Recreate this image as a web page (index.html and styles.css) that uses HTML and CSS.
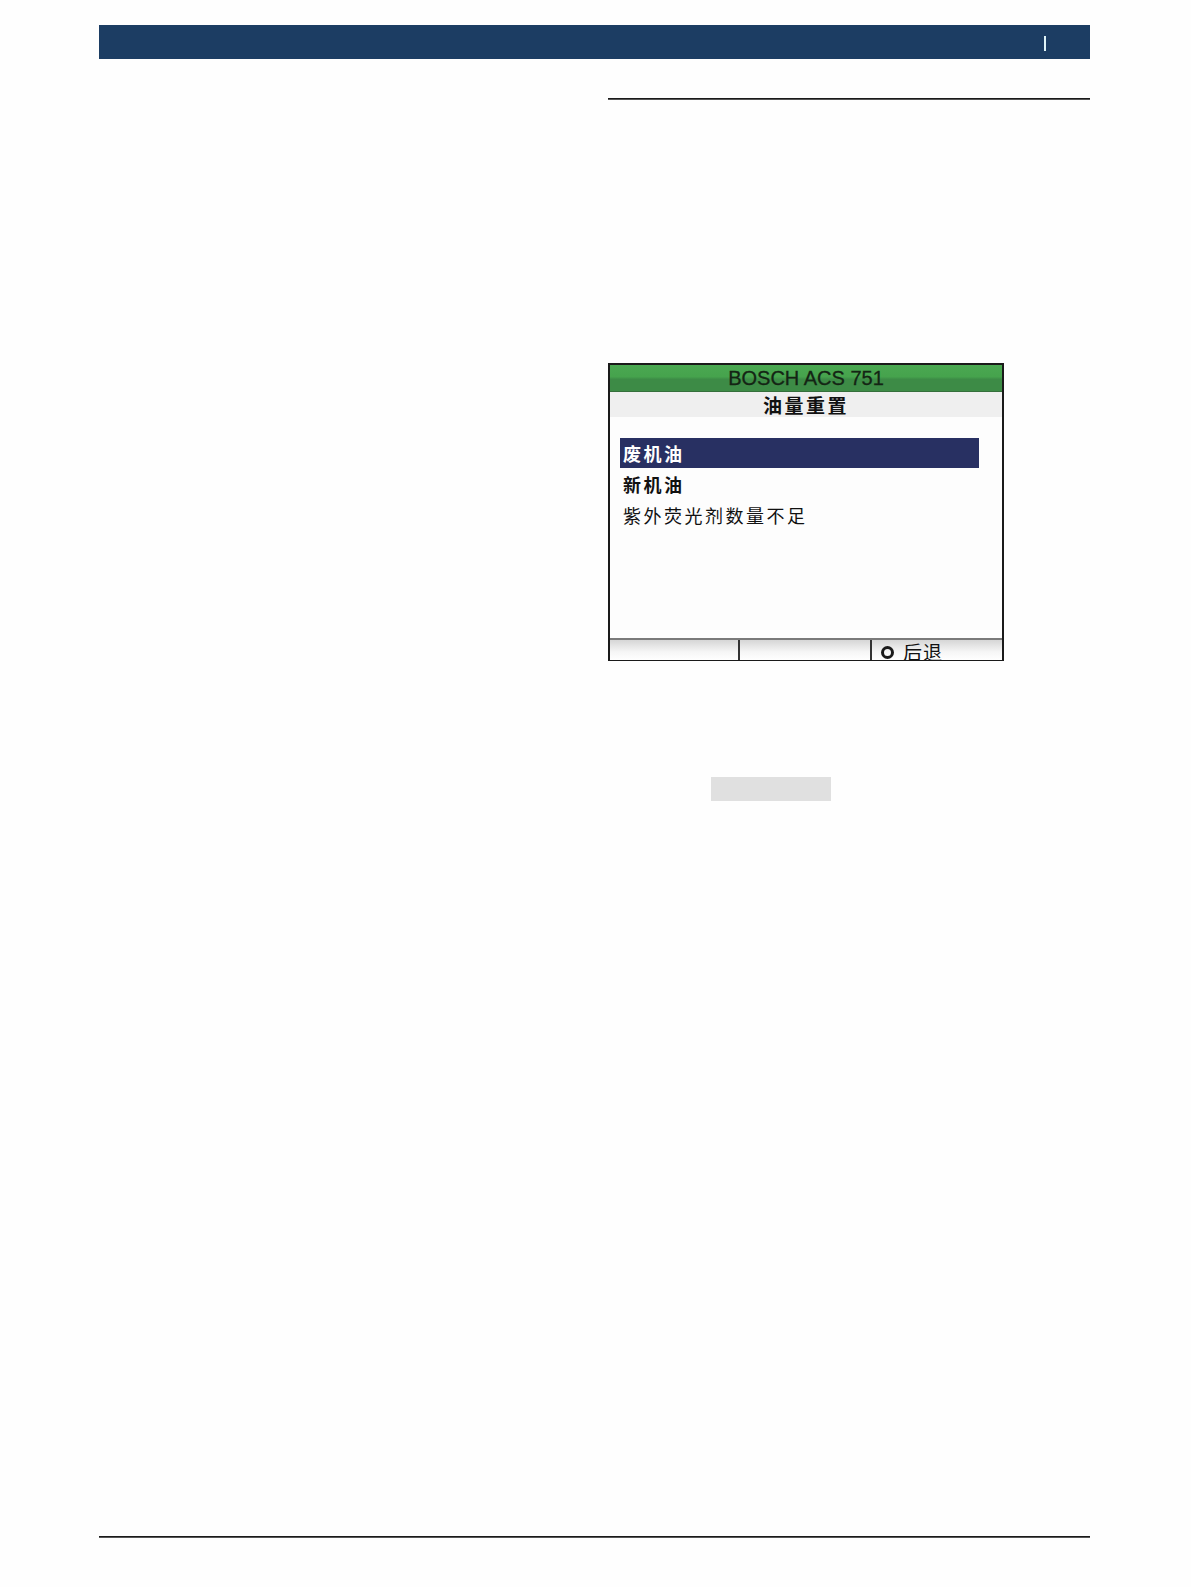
FILE: index.html
```html
<!DOCTYPE html>
<html lang="zh">
<head>
<meta charset="utf-8">
<title>BOSCH ACS 751</title>
<link rel="stylesheet" href="styles.css">
</head>
<body>
<div class="page">
  <header class="topbar"><span class="mark"></span></header>
  <div class="cols">
    <div class="col-left"></div>
    <div class="col-right">
      <div class="rule"></div>
      <div class="screen">
        <div class="s-title">BOSCH ACS 751</div>
        <div class="s-sub">油量重置</div>
        <div class="s-body">
          <div class="item sel">废机油</div>
          <div class="item bold">新机油</div>
          <div class="item">紫外荧光剂数量不足</div>
        </div>
        <div class="s-foot">
          <div class="cell"></div>
          <div class="cell"></div>
          <div class="cell back"><span class="ring"></span><span class="lbl">后退</span></div>
        </div>
      </div>
      <div class="caption"></div>
    </div>
  </div>
  <div class="bottom-rule"></div>
</div>
</body>
</html>
```
FILE: styles.css
```css
html, body { margin: 0; padding: 0; background: #fefefe; }
.page { width: 1191px; height: 1587px; padding-left: 99px; padding-top: 25px; box-sizing: border-box; position: relative; }
.topbar { width: 991px; height: 34px; background: #1c3d63; display: flex; justify-content: flex-end; align-items: flex-start; box-sizing: border-box; padding-right: 44px; padding-top: 11px; }
.mark { width: 2px; height: 15px; background: #dff3f7; display: block; }
.cols { display: flex; }
.col-left { width: 509px; }
.col-right { width: 482px; padding-top: 39px; }
.rule { height: 1px; background: #1a1a1a; border-bottom: 0.5px solid #555; }
.screen { margin-top: 263px; width: 396px; height: 298px; box-sizing: border-box; border: 2px solid #1a1a1a; border-bottom-width: 1px; background: #fdfdfd; display: flex; flex-direction: column; overflow: hidden; }
.s-title { height: 27px; background: linear-gradient(#4aa851 0%, #46a34d 45%, #3d8b46 55%, #3d8b46 100%); border-bottom: 1px solid #356f3b; box-sizing: border-box; text-align: center; font-family: "Liberation Sans", Arial, sans-serif; font-size: 20px; line-height: 27px; color: #142414; -webkit-text-stroke: 0.3px #142414; }
.s-sub { height: 25px; background: #efefef; text-align: center; font-family: "Noto Sans CJK SC", sans-serif; font-weight: 700; font-size: 19px; line-height: 25px; letter-spacing: 2.5px; color: #111; }
.s-body { flex: 1; padding-top: 21px; padding-left: 10px; display: flex; flex-direction: column; }
.item { height: 31px; width: 359px; box-sizing: border-box; padding-left: 3px; font-family: "Noto Sans CJK SC", sans-serif; font-size: 18px; letter-spacing: 2.5px; line-height: 30px; color: #111; }
.item.sel { height: 30px; margin-bottom: 1px; background: #283062; color: #fff; font-weight: 700; }
.item.bold { font-weight: 700; }
.s-foot { height: 22px; border-top: 2px solid #7a7a7a; box-sizing: border-box; display: flex; background: linear-gradient(#d6d6d6, #f6f6f6 60%, #fff); }
.cell { width: 130px; border-right: 2px solid #333; box-sizing: border-box; overflow: hidden; }
.cell:nth-child(2) { width: 132px; }
.cell.back { flex: 1; border-right: 0; display: flex; align-items: flex-start; padding-left: 9px; padding-top: 1px; }
.ring { width: 7px; height: 7px; border: 3px solid #1a1a1a; border-radius: 50%; margin-top: 5px; margin-right: 9px; flex: none; }
.lbl { font-family: "Noto Sans CJK SC", sans-serif; font-size: 19px; line-height: 22px; letter-spacing: 1px; color: #111; }
.caption { margin-left: 103px; margin-top: 116px; width: 120px; height: 24px; background: #e0e0e0; }
.bottom-rule { position: absolute; left: 99px; top: 1536px; width: 991px; height: 1px; background: #1a1a1a; border-bottom: 0.5px solid #555; }
```
